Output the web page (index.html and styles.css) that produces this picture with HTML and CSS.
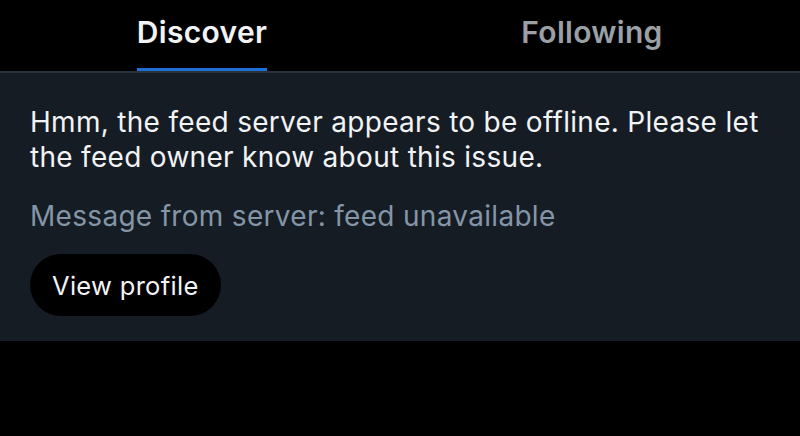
FILE: index.html
```html
<!DOCTYPE html>
<html lang="en">
<head>
<meta charset="utf-8">
<link rel="stylesheet" href="styles.css">
</head>
<body>
<div class="app">
  <nav class="tabs">
    <div class="tab active"><span class="tab-label">Discover</span></div>
    <div class="tab"><span class="tab-label">Following</span></div>
  </nav>
  <section class="panel">
    <p class="message">Hmm, the feed server appears to be offline. Please let the feed owner know about this issue.</p>
    <p class="server-msg">Message from server: feed unavailable</p>
    <button class="btn">View profile</button>
  </section>
</div>
</body>
</html>
```
FILE: styles.css
```css
* { box-sizing: border-box; }
html, body { margin: 0; padding: 0; }
body {
  background: #000;
  font-family: Inter, "Noto Sans", sans-serif;
  width: 800px;
  height: 436px;
  overflow: hidden;
}
.tabs {
  display: flex;
  height: 73px;
  padding: 0 13px 0 7px;
  border-bottom: 2px solid #2a323d;
}
.tab {
  flex: 1;
  display: flex;
  justify-content: center;
}
.tab-label {
  font-size: 30px;
  font-weight: 600;
  color: #9aa0a6;
  padding-top: 12px;
  height: 71px;
  border-bottom: 3px solid transparent;
  line-height: 40px;
  letter-spacing: 0.3px;
}
.tab.active .tab-label {
  color: #f1f3f5;
  border-bottom-color: #1d70d6;
}
.panel {
  background: #161c24;
  height: 268px;
  padding: 32px 30px 0;
}
.message {
  margin: 0;
  color: #f1f3f5;
  font-size: 28px;
  line-height: 35px;
  letter-spacing: 0.3px;
}
.server-msg {
  margin: 24px 0 0;
  color: #8495a8;
  font-size: 28px;
  line-height: 35px;
  letter-spacing: 0.3px;
}
.btn {
  margin-top: 20px;
  background: #000;
  color: #f1f3f5;
  border: none;
  border-radius: 32px;
  height: 62px;
  padding: 0 22px;
  font-family: Inter, "Noto Sans", sans-serif;
  font-size: 25.5px;
  letter-spacing: 0.3px;
}
```
